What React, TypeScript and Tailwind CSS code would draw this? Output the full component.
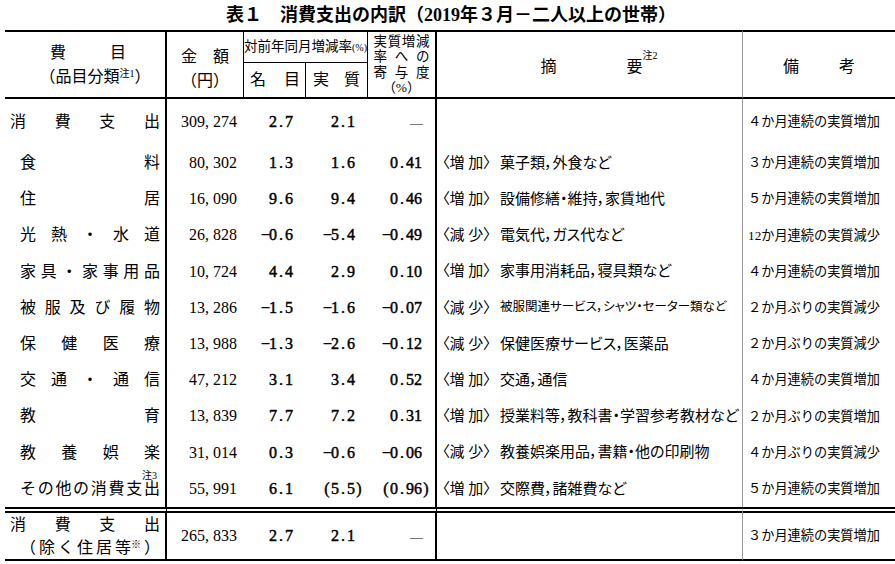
import type { ReactNode } from 'react';

type Row = {
  label: string[];
  amount: string;
  nominal: string;
  real: string;
  contrib: string;
  kind?: string;
  desc?: string;
  small?: boolean;
  note: string;
  noteMark?: string;
};

const FONT = "font-['Liberation_Serif','Noto_Sans_CJK_JP',serif]";

const ROWS: Row[] = [
  { label: ['食', '料'], amount: '80,302', nominal: '1.3', real: '1.6', contrib: '0.41', kind: '増 加', desc: '菓子類，外食など', note: '３か月連続の実質増加' },
  { label: ['住', '居'], amount: '16,090', nominal: '9.6', real: '9.4', contrib: '0.46', kind: '増 加', desc: '設備修繕・維持，家賃地代', note: '５か月連続の実質増加' },
  { label: ['光', '熱', '・', '水', '道'], amount: '26,828', nominal: '−0.6', real: '−5.4', contrib: '−0.49', kind: '減 少', desc: '電気代，ガス代など', note: '12か月連続の実質減少' },
  { label: ['家', '具', '・', '家', '事', '用', '品'], amount: '10,724', nominal: '4.4', real: '2.9', contrib: '0.10', kind: '増 加', desc: '家事用消耗品，寝具類など', note: '４か月連続の実質増加' },
  { label: ['被', '服', '及', 'び', '履', '物'], amount: '13,286', nominal: '−1.5', real: '−1.6', contrib: '−0.07', kind: '減 少', desc: '被服関連サービス，シャツ・セーター類など', small: true, note: '２か月ぶりの実質減少' },
  { label: ['保', '健', '医', '療'], amount: '13,988', nominal: '−1.3', real: '−2.6', contrib: '−0.12', kind: '減 少', desc: '保健医療サービス，医薬品', note: '２か月ぶりの実質減少' },
  { label: ['交', '通', '・', '通', '信'], amount: '47,212', nominal: '3.1', real: '3.4', contrib: '0.52', kind: '増 加', desc: '交通，通信', note: '４か月連続の実質増加' },
  { label: ['教', '育'], amount: '13,839', nominal: '7.7', real: '7.2', contrib: '0.31', kind: '増 加', desc: '授業料等，教科書・学習参考教材など', note: '２か月ぶりの実質増加' },
  { label: ['教', '養', '娯', '楽'], amount: '31,014', nominal: '0.3', real: '−0.6', contrib: '−0.06', kind: '減 少', desc: '教養娯楽用品，書籍・他の印刷物', note: '４か月ぶりの実質減少' },
  { label: ['そ', 'の', '他', 'の', '消', '費', '支', '出'], amount: '55,991', nominal: '6.1', real: '(5.5)', contrib: '(0.96)', kind: '増 加', desc: '交際費，諸雑費など', note: '５か月連続の実質増加', noteMark: '注3' },
];

// fixed 8px cells, like the half-width digits of the original
function Num({ value, bold }: { value: string; bold?: boolean }) {
  const hang = value.startsWith('(');
  return (
    <span className={`inline-flex ${hang ? '-mr-[8px]' : ''} ${bold ? '[-webkit-text-stroke:0.45px_black]' : ''}`}>
      {value.split('').map((ch, i) => (
        <span key={i} className={ch === ',' ? 'w-[8px] text-left' : 'w-[8px] text-center'}>
          {ch}
        </span>
      ))}
    </span>
  );
}

function Spread({ chars, className }: { chars: ReactNode[]; className?: string }) {
  return (
    <div className={`flex justify-between ${className ?? ''}`}>
      {chars.map((c, i) => (
        <span key={i}>{c}</span>
      ))}
    </div>
  );
}

function Dash() {
  return <span className="font-['Liberation_Serif',serif] text-[13px]">―</span>;
}

export default function App() {
  return (
    <div className={`h-[564px] w-[895px] overflow-hidden bg-white pl-[5px] text-black ${FONT}`}>
      <div className="flex h-[30px] items-center justify-center pl-[2px] text-[18px] leading-none font-bold">
        表１　消費支出の内訳（2019年３月－二人以上の世帯）
      </div>

      <table className="w-[890px] table-fixed border-separate border-spacing-0">
        <colgroup>
          <col className="w-[162px]" />
          <col className="w-[77px]" />
          <col className="w-[62px]" />
          <col className="w-[62px]" />
          <col className="w-[69px]" />
          <col className="w-[306px]" />
          <col className="w-[152px]" />
        </colgroup>
        <thead>
          <tr className="h-[33px]">
            <th rowSpan={2} className="border-t-2 border-r-2 border-b-2 border-black p-0 text-[16px] leading-[24px] font-normal">
              <div className="flex flex-col items-center">
                <Spread chars={['費', '目']} className="ml-[6px] w-[76px]" />
                <div className="pl-[20px]">
                  （品目分類<sup className="text-[10px]">注1</sup>）
                </div>
              </div>
            </th>
            <th rowSpan={2} className="border-t-2 border-r border-b-2 border-black p-0 text-[16px] leading-[24px] font-normal">
              <div className="mt-[9px] flex flex-col items-center">
                <Spread chars={['金', '額']} className="w-[48px]" />
                <div>（円）</div>
              </div>
            </th>
            <th colSpan={2} className="border-t-2 border-r border-b border-black p-0 text-[13.5px] whitespace-nowrap font-normal">
              対前年同月増減率<span className="text-[10px]">(%)</span>
            </th>
            <th rowSpan={2} className="border-t-2 border-r-2 border-b-2 border-black p-0 text-[13.5px] leading-[15.5px] font-normal">
              <div className="mx-auto w-[56px]">
                <Spread chars={['実', '質', '増', '減']} />
                <Spread chars={['率', 'へ', 'の']} />
                <Spread chars={['寄', '与', '度']} />
                <div className="text-center">（%）</div>
              </div>
            </th>
            <th rowSpan={2} className="border-t-2 border-r border-b-2 border-black border-r-[#9a9a9a] p-0 text-[16px] font-normal">
              <div className="mt-[4px] flex justify-center gap-[70px] pl-[4px]">
                <span>摘</span>
                <span className="relative">
                  要<span className="absolute -top-[4px] left-full text-[10px] leading-none whitespace-nowrap">注2</span>
                </span>
              </div>
            </th>
            <th rowSpan={2} className="border-t-2 border-b-2 border-black p-0 text-[16px] font-normal">
              <div className="mt-[4px] flex justify-center gap-[40px]">
                <span>備</span>
                <span>考</span>
              </div>
            </th>
          </tr>
          <tr className="h-[36px]">
            <th className="border-r border-b-2 border-black p-0 text-[16px] font-normal">
              <Spread chars={['名', '目']} className="pr-[5px] pl-[6px]" />
            </th>
            <th className="border-r border-b-2 border-black p-0 text-[16px] font-normal">
              <Spread chars={['実', '質']} className="px-[7px]" />
            </th>
          </tr>
        </thead>

        <tbody className="text-[16px]">
          <tr className="h-[46px]">
            <td className="border-r-2 border-black p-0">
              <Spread chars={['消', '費', '支', '出']} className="pr-[5px] pl-[5px]" />
            </td>
            <td className="p-0 pr-[7px] text-right">
              <Num value="309,274" />
            </td>
            <td className="p-0 pr-[13px] text-right">
              <Num value="2.7" bold />
            </td>
            <td className="p-0 pr-[13px] text-right">
              <Num value="2.1" bold />
            </td>
            <td className="border-r-2 border-black p-0 pr-[12px] text-right">
              <Dash />
            </td>
            <td className="border-r border-r-[#9a9a9a] p-0" />
            <td className="p-0 pr-[10px] text-center text-[13.2px] whitespace-nowrap">４か月連続の実質増加</td>
          </tr>

          {ROWS.map((r) => (
            <tr key={r.amount} className="h-[36.2px]">
              <td className="relative border-r-2 border-black p-0">
                <Spread chars={r.label} className="pr-[5px] pl-[15px]" />
                {r.noteMark ? (
                  <span className="absolute top-0 right-[8px] text-[10px] leading-none">{r.noteMark}</span>
                ) : null}
              </td>
              <td className="p-0 pr-[7px] text-right">
                <Num value={r.amount} />
              </td>
              <td className="p-0 pr-[13px] text-right">
                <Num value={r.nominal} bold />
              </td>
              <td className="p-0 pr-[13px] text-right">
                <Num value={r.real} bold />
              </td>
              <td className="border-r-2 border-black p-0 pr-[13px] text-right">
                <Num value={r.contrib} bold />
              </td>
              <td className="border-r border-r-[#9a9a9a] p-0 pl-[5px] [font-feature-settings:'palt']">
                <div className="flex items-center whitespace-nowrap">
                  <span className="w-[58px] shrink-0 text-[15px]">〈{r.kind}〉</span>
                  <span className={r.small ? 'text-[12.5px]' : 'text-[15px]'}>{r.desc}</span>
                </div>
              </td>
              <td className="p-0 pr-[10px] text-center text-[13.2px] whitespace-nowrap">{r.note}</td>
            </tr>
          ))}

          <tr className="h-[51px]">
            <td className="border-t-[6px] border-r-2 border-b-2 border-double border-black border-r-solid border-b-solid p-0 leading-[23px]">
              <Spread chars={['消', '費', '支', '出']} className="pr-[5px] pl-[5px]" />
              <Spread
                chars={['（', '除', 'く', '住', '居', <>等<sup className="text-[10px]">※</sup></>, '）']}
                className="pr-[5px] pl-[15px]"
              />
            </td>
            <td className="border-t-[6px] border-b-2 border-double border-black border-b-solid p-0 pr-[7px] text-right">
              <Num value="265,833" />
            </td>
            <td className="border-t-[6px] border-b-2 border-double border-black border-b-solid p-0 pr-[13px] text-right">
              <Num value="2.7" bold />
            </td>
            <td className="border-t-[6px] border-b-2 border-double border-black border-b-solid p-0 pr-[13px] text-right">
              <Num value="2.1" bold />
            </td>
            <td className="border-t-[6px] border-r-2 border-b-2 border-double border-black border-r-solid border-b-solid p-0 pr-[12px] text-right">
              <Dash />
            </td>
            <td className="border-t-[6px] border-r border-b-2 border-double border-black border-r-[#9a9a9a] border-r-solid border-b-solid p-0" />
            <td className="border-t-[6px] border-b-2 border-double border-black border-b-solid p-0 pr-[10px] text-center text-[13.2px] whitespace-nowrap">
              ３か月連続の実質増加
            </td>
          </tr>
        </tbody>
      </table>
    </div>
  );
}
